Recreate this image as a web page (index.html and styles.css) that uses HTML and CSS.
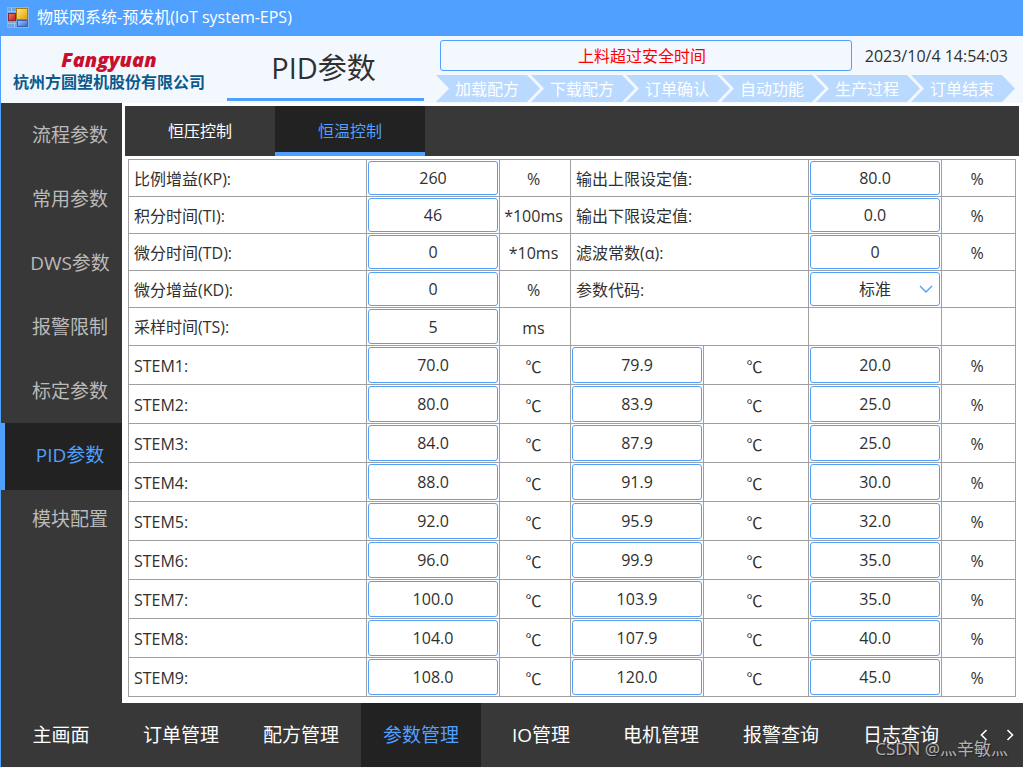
FILE: index.html
```html
<!DOCTYPE html>
<html lang="zh-cn">
<head>
    <meta charset="UTF-8">
    <meta name="viewport" content="width=device-width, initial-scale=1">
    <title>物联网系统-预发机(IoT system-EPS)</title>
    <link rel="stylesheet" href="styles.css">
</head>
<body>
    <div class="window">
        <div class="titlebar">
            <svg class="app-icon" width="22" height="21" viewBox="0 0 22 21">
                <defs>
                    <linearGradient id="gold" x1="0" y1="0" x2="1" y2="1"><stop offset="0" stop-color="#ffe98a"/><stop offset="1" stop-color="#e0a000"/></linearGradient>
                    <linearGradient id="red" x1="0" y1="0" x2="1" y2="1"><stop offset="0" stop-color="#f08070"/><stop offset="1" stop-color="#b81c1c"/></linearGradient>
                    <linearGradient id="blue" x1="0" y1="0" x2="1" y2="1"><stop offset="0" stop-color="#a8c8ff"/><stop offset="1" stop-color="#2f62d8"/></linearGradient>
                </defs>
                <rect x="0.5" y="0.5" width="21" height="20" fill="#6fa6e0" stroke="#8db4dc"/>
                <path d="M1 4.500h8M1 16.500h8M4.500 1v4M7.500 15v5" stroke="#9fc4ea"/>
                <rect x="9.500" y="1.500" width="11" height="11" fill="url(#gold)" stroke="#a87c10"/>
                <rect x="1.500" y="6.500" width="7" height="7" fill="url(#red)" stroke="#8e2430"/>
                <rect x="10.500" y="13.500" width="10" height="6" fill="url(#blue)" stroke="#3c62b4"/>
            </svg>
            <span>物联网系统-预发机(IoT system-EPS)</span>
        </div>

        <header class="header">
            <div class="logo">
                <div class="logo-en">Fangyuan</div>
                <div class="logo-cn">杭州方圆塑机股份有限公司</div>
            </div>
            <h1 class="page-title">PID参数</h1>
            <div class="status">
                <div class="status-top">
                    <div class="alarm">上料超过安全时间</div>
                    <time class="clock">2023/10/4 14:54:03</time>
                </div>
                <ol class="steps">
                    <li>加载配方</li>
                    <li>下载配方</li>
                    <li>订单确认</li>
                    <li>自动功能</li>
                    <li>生产过程</li>
                    <li>订单结束</li>
                </ol>
            </div>
        </header>

        <div class="main">
            <nav class="sidebar">
                <a href="#">流程参数</a>
                <a href="#">常用参数</a>
                <a href="#">DWS参数</a>
                <a href="#">报警限制</a>
                <a href="#">标定参数</a>
                <a href="#" class="active">PID参数</a>
                <a href="#">模块配置</a>
            </nav>

            <main class="content">
                <div class="tabs">
                    <button type="button">恒压控制</button>
                    <button type="button" class="active">恒温控制</button>
                </div>

                <table class="params">
                    <colgroup>
                        <col>
                        <col class="col-value">
                        <col class="col-unit">
                        <col class="col-value">
                        <col class="col-temp">
                        <col class="col-value">
                        <col class="col-last">
                    </colgroup>
                    <tbody>
                        <tr>
                            <td class="name"><label for="kp">比例增益(KP):</label></td>
                            <td><input id="kp" type="text" value="260"></td>
                            <td class="unit">%</td>
                            <td class="name" colspan="2"><label for="outMax">输出上限设定值:</label></td>
                            <td><input id="outMax" type="text" value="80.0"></td>
                            <td class="unit">%</td>
                        </tr>
                        <tr>
                            <td class="name"><label for="ti">积分时间(TI):</label></td>
                            <td><input id="ti" type="text" value="46"></td>
                            <td class="unit">*100ms</td>
                            <td class="name" colspan="2"><label for="outMin">输出下限设定值:</label></td>
                            <td><input id="outMin" type="text" value="0.0"></td>
                            <td class="unit">%</td>
                        </tr>
                        <tr>
                            <td class="name"><label for="td">微分时间(TD):</label></td>
                            <td><input id="td" type="text" value="0"></td>
                            <td class="unit">*10ms</td>
                            <td class="name" colspan="2"><label for="alpha">滤波常数(α):</label></td>
                            <td><input id="alpha" type="text" value="0"></td>
                            <td class="unit">%</td>
                        </tr>
                        <tr>
                            <td class="name"><label for="kd">微分增益(KD):</label></td>
                            <td><input id="kd" type="text" value="0"></td>
                            <td class="unit">%</td>
                            <td class="name" colspan="2"><label for="code">参数代码:</label></td>
                            <td>
                                <div class="select-box">
                                    <select id="code"><option>标准</option></select>
                                    <svg width="14" height="8" viewBox="0 0 14 8"><path d="M1 1l6 6 6-6" fill="none" stroke="#50a0ff" stroke-width="1.4"/></svg>
                                </div>
                            </td>
                            <td></td>
                        </tr>
                        <tr class="group-end">
                            <td class="name"><label for="ts">采样时间(TS):</label></td>
                            <td><input id="ts" type="text" value="5"></td>
                            <td class="unit">ms</td>
                            <td colspan="2"></td>
                            <td></td>
                            <td></td>
                        </tr>
                    </tbody>
                    <tbody class="stems">
                        <tr>
                            <td class="name"><label for="stem1">STEM1:</label></td>
                            <td><input id="stem1" type="text" value="70.0"></td>
                            <td class="unit degree">℃</td>
                            <td><input type="text" value="79.9" aria-label="STEM1"></td>
                            <td class="unit degree">℃</td>
                            <td><input type="text" value="20.0" aria-label="STEM1 %"></td>
                            <td class="unit">%</td>
                        </tr>
                        <tr>
                            <td class="name"><label for="stem2">STEM2:</label></td>
                            <td><input id="stem2" type="text" value="80.0"></td>
                            <td class="unit degree">℃</td>
                            <td><input type="text" value="83.9" aria-label="STEM2"></td>
                            <td class="unit degree">℃</td>
                            <td><input type="text" value="25.0" aria-label="STEM2 %"></td>
                            <td class="unit">%</td>
                        </tr>
                        <tr>
                            <td class="name"><label for="stem3">STEM3:</label></td>
                            <td><input id="stem3" type="text" value="84.0"></td>
                            <td class="unit degree">℃</td>
                            <td><input type="text" value="87.9" aria-label="STEM3"></td>
                            <td class="unit degree">℃</td>
                            <td><input type="text" value="25.0" aria-label="STEM3 %"></td>
                            <td class="unit">%</td>
                        </tr>
                        <tr>
                            <td class="name"><label for="stem4">STEM4:</label></td>
                            <td><input id="stem4" type="text" value="88.0"></td>
                            <td class="unit degree">℃</td>
                            <td><input type="text" value="91.9" aria-label="STEM4"></td>
                            <td class="unit degree">℃</td>
                            <td><input type="text" value="30.0" aria-label="STEM4 %"></td>
                            <td class="unit">%</td>
                        </tr>
                        <tr>
                            <td class="name"><label for="stem5">STEM5:</label></td>
                            <td><input id="stem5" type="text" value="92.0"></td>
                            <td class="unit degree">℃</td>
                            <td><input type="text" value="95.9" aria-label="STEM5"></td>
                            <td class="unit degree">℃</td>
                            <td><input type="text" value="32.0" aria-label="STEM5 %"></td>
                            <td class="unit">%</td>
                        </tr>
                        <tr>
                            <td class="name"><label for="stem6">STEM6:</label></td>
                            <td><input id="stem6" type="text" value="96.0"></td>
                            <td class="unit degree">℃</td>
                            <td><input type="text" value="99.9" aria-label="STEM6"></td>
                            <td class="unit degree">℃</td>
                            <td><input type="text" value="35.0" aria-label="STEM6 %"></td>
                            <td class="unit">%</td>
                        </tr>
                        <tr>
                            <td class="name"><label for="stem7">STEM7:</label></td>
                            <td><input id="stem7" type="text" value="100.0"></td>
                            <td class="unit degree">℃</td>
                            <td><input type="text" value="103.9" aria-label="STEM7"></td>
                            <td class="unit degree">℃</td>
                            <td><input type="text" value="35.0" aria-label="STEM7 %"></td>
                            <td class="unit">%</td>
                        </tr>
                        <tr>
                            <td class="name"><label for="stem8">STEM8:</label></td>
                            <td><input id="stem8" type="text" value="104.0"></td>
                            <td class="unit degree">℃</td>
                            <td><input type="text" value="107.9" aria-label="STEM8"></td>
                            <td class="unit degree">℃</td>
                            <td><input type="text" value="40.0" aria-label="STEM8 %"></td>
                            <td class="unit">%</td>
                        </tr>
                        <tr>
                            <td class="name"><label for="stem9">STEM9:</label></td>
                            <td><input id="stem9" type="text" value="108.0"></td>
                            <td class="unit degree">℃</td>
                            <td><input type="text" value="120.0" aria-label="STEM9"></td>
                            <td class="unit degree">℃</td>
                            <td><input type="text" value="45.0" aria-label="STEM9 %"></td>
                            <td class="unit">%</td>
                        </tr>
                    </tbody>
                </table>
            </main>
        </div>

        <footer class="footer">
            <nav class="bottom-nav">
                <a href="#">主画面</a>
                <a href="#">订单管理</a>
                <a href="#">配方管理</a>
                <a href="#" class="active">参数管理</a>
                <a href="#">IO管理</a>
                <a href="#">电机管理</a>
                <a href="#">报警查询</a>
                <a href="#">日志查询</a>
            </nav>
            <div class="pager">
                <button type="button" aria-label="上一页"><svg width="8" height="12" viewBox="0 0 8 12"><path d="M6.500 1L1.500 6l5 5"/></svg></button>
                <button type="button" aria-label="下一页"><svg width="8" height="12" viewBox="0 0 8 12"><path d="M1.500 1l5 5-5 5"/></svg></button>
            </div>
            <div class="watermark">CSDN @灬辛敏灬</div>
        </footer>
    </div>
</body>
</html>
```
FILE: styles.css
```css
* {
    box-sizing: border-box;
}
body {
    margin: 0;
    font-family: "Open Sans", "Noto Sans CJK SC", sans-serif;
    font-size: 16px;
    line-height: 24px;
    color: #303030;
    background-color: #f3f8ff;
}
a {
    text-decoration: none;
}
button, input, select {
    font: inherit;
    color: inherit;
}
.window {
    border-left: 1px solid #50a0ff;
}

/* title bar */
.titlebar {
    display: flex;
    align-items: center;
    gap: 8px;
    height: 36px;
    padding: 0 0 2px 6px;
    color: white;
    background-color: #50a0ff;
}

/* header */
.header {
    display: flex;
    height: 67px;
    background-color: #f3f8ff;
}
.logo {
    width: 226px;
    padding: 12px 10px 0 0;
    text-align: center;
}
.logo-en {
    color: #c8102e;
    font-family: "Open Sans", sans-serif;
    font-size: 20px;
    font-weight: 800;
    font-style: italic;
    line-height: 23px;
}
.logo-cn {
    color: #0b5a8a;
    font-family: "Noto Sans CJK SC", sans-serif;
    font-weight: bold;
    line-height: 20px;
}
.page-title {
    width: 197px;
    height: 65px;
    margin: 0;
    padding-right: 4px;
    font-size: 29px;
    font-weight: normal;
    line-height: 64px;
    text-align: center;
    border-bottom: 3px solid #50a0ff;
}
.status {
    flex: 1;
    padding: 4px 8px 0 12px;
}
.status-top {
    display: flex;
    align-items: center;
    margin: 0 0 4px 4px;
}
.alarm {
    flex: 1;
    height: 31px;
    padding-right: 8px;
    line-height: 31px;
    color: red;
    text-align: center;
    border: 1px solid #50a0ff;
    border-radius: 3px;
}
.clock {
    width: 163px;
    padding-right: 7px;
    text-align: right;
    white-space: nowrap;
}
.steps {
    display: flex;
    margin: 0;
    padding: 0 0 0 9px;
    list-style: none;
}
.steps li {
    flex: 1;
    height: 27px;
    margin-left: -9px;
    padding-right: 2px;
    line-height: 28px;
    color: white;
    text-align: center;
    white-space: nowrap;
    background-color: #b9d9ff;
    clip-path: polygon(0 0, calc(100% - 13px) 0, 100% 50%, calc(100% - 13px) 100%, 0 100%, 13px 50%);
}

/* main */
.main {
    display: flex;
    background-color: white;
}
.sidebar {
    width: 121px;
    background-color: #383838;
}
.sidebar a {
    display: block;
    height: 64px;
    padding-left: 17px;
    line-height: 65px;
    font-size: 19px;
    color: #bababa;
    text-align: center;
}
.sidebar .active {
    height: 67px;
    margin-bottom: -3px;
    padding-left: 13px;
    color: #50a0ff;
    border-left: 4px solid #50a0ff;
    background-color: #222222;
}
.content {
    flex: 1;
    padding: 3px 4px 6px 3px;
}
.tabs {
    display: flex;
    height: 50px;
    margin-bottom: 3px;
    background-color: #383838;
}
.tabs button {
    width: 150px;
    padding: 4px 0 0;
    color: white;
    font-size: 16px;
    border: none;
    border-bottom: 4px solid transparent;
    background: none;
    cursor: pointer;
}
.tabs .active {
    color: #50a0ff;
    border-bottom-color: #50a0ff;
    background-color: #222222;
}

/* table */
.params {
    width: calc(100% - 6px);
    margin: 0 3px;
    table-layout: fixed;
    border-collapse: collapse;
}
.col-value { width: 133px; }
.col-unit { width: 71px; }
.col-temp { width: 105px; }
.col-last { width: 74px; }
.params td {
    padding: 1px;
    text-align: center;
    border: 1px solid #a0a0a0;
}
.params .name {
    padding: 2px 5px 1px;
    text-align: left;
}
.params .unit {
    padding: 3px 4px 1px 1px;
}
.params .degree {
    font-family: "Noto Sans CJK SC", sans-serif;
}
.params input, .params select {
    display: block;
    width: 130px;
    height: 34px;
    padding: 0 8px;
    text-align: center;
    background-color: white;
    border: 1px solid #50a0ff;
    border-radius: 3px;
}
.params .group-end input {
    height: 35px;
}
.params .stems input {
    height: 36px;
}
.select-box {
    position: relative;
    width: 130px;
}
.select-box select {
    appearance: none;
    text-align-last: center;
}
.select-box svg {
    position: absolute;
    top: 13px;
    right: 7px;
    pointer-events: none;
}

/* footer */
.footer {
    position: relative;
    display: flex;
    height: 64px;
    background-color: #383838;
}
.bottom-nav {
    display: flex;
    flex: 1;
}
.bottom-nav a {
    width: 120px;
    line-height: 65px;
    color: white;
    font-size: 19px;
    text-align: center;
}
.bottom-nav .active {
    color: #50a0ff;
    background-color: #222222;
}
.pager {
    display: flex;
    align-items: center;
}
.pager button {
    display: flex;
    justify-content: center;
    width: 26px;
    padding: 0;
    border: none;
    background: none;
    cursor: pointer;
}
.pager path {
    fill: none;
    stroke: white;
    stroke-width: 1.6;
}
.watermark {
    position: absolute;
    right: 15px;
    bottom: 6px;
    color: rgba(255, 255, 255, 0.65);
    font-size: 17px;
    text-shadow: 1px 1px 1px #222222;
    white-space: nowrap;
    pointer-events: none;
}
```
